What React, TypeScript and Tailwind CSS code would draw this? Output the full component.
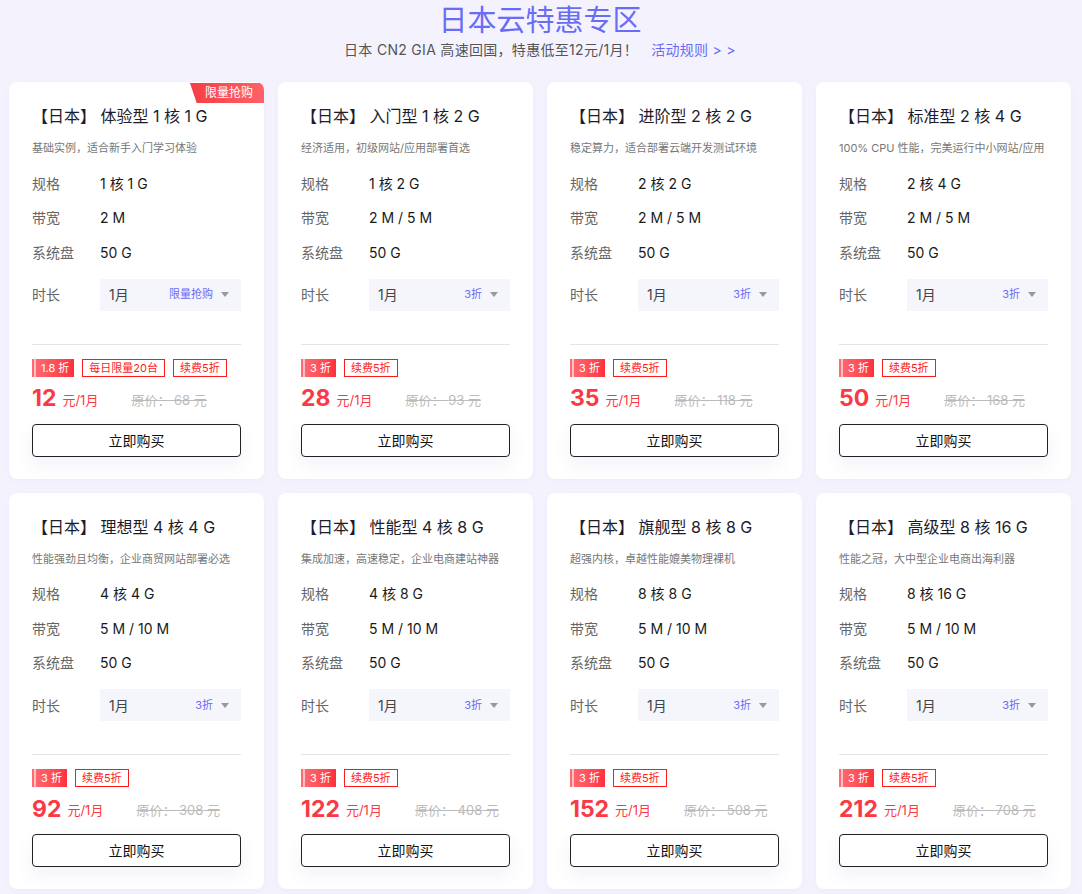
const plans = [
  { name: '体验型', spec: '1 核 1 G', desc: '基础实例，适合新手入门学习体验', bw: '2 M', sel: '限量抢购', off: '1.8 折', tags: ['每日限量20台', '续费5折'], price: 12, orig: 68, hot: true },
  { name: '入门型', spec: '1 核 2 G', desc: '经济适用，初级网站/应用部署首选', bw: '2 M / 5 M', sel: '3折', off: '3 折', tags: ['续费5折'], price: 28, orig: 93 },
  { name: '进阶型', spec: '2 核 2 G', desc: '稳定算力，适合部署云端开发测试环境', bw: '2 M / 5 M', sel: '3折', off: '3 折', tags: ['续费5折'], price: 35, orig: 118 },
  { name: '标准型', spec: '2 核 4 G', desc: '100% CPU 性能，完美运行中小网站/应用', bw: '2 M / 5 M', sel: '3折', off: '3 折', tags: ['续费5折'], price: 50, orig: 168 },
  { name: '理想型', spec: '4 核 4 G', desc: '性能强劲且均衡，企业商贸网站部署必选', bw: '5 M / 10 M', sel: '3折', off: '3 折', tags: ['续费5折'], price: 92, orig: 308 },
  { name: '性能型', spec: '4 核 8 G', desc: '集成加速，高速稳定，企业电商建站神器', bw: '5 M / 10 M', sel: '3折', off: '3 折', tags: ['续费5折'], price: 122, orig: 408 },
  { name: '旗舰型', spec: '8 核 8 G', desc: '超强内核，卓越性能媲美物理裸机', bw: '5 M / 10 M', sel: '3折', off: '3 折', tags: ['续费5折'], price: 152, orig: 508 },
  { name: '高级型', spec: '8 核 16 G', desc: '性能之冠，大中型企业电商出海利器', bw: '5 M / 10 M', sel: '3折', off: '3 折', tags: ['续费5折'], price: 212, orig: 708 },
]

type Plan = (typeof plans)[number]

function Card({ p }: { p: Plan }) {
  return (
    <div className="relative overflow-hidden bg-white rounded-lg shadow-[0_2px_10px_rgba(100,100,200,0.06)] px-[23px] pt-[22px] pb-[22px]">
      {p.hot && (
        <div className="absolute top-px right-0 w-[74px] h-[20px] bg-gradient-to-r from-[#f63c44] to-[#ff6168] [clip-path:polygon(0_0,100%_0,100%_100%,9%_100%)] text-white text-[12px] leading-[20px] text-center pl-[4px]">
          限量抢购
        </div>
      )}
      <div className="text-[16px] leading-[24px] text-[#1c1c2c]">【日本】 {p.name} {p.spec}</div>
      <div className="mt-[10px] text-[11px] leading-[20px] text-[#777]">{p.desc}</div>
      <div className="mt-[8px] text-[14px]">
        {[
          ['规格', p.spec],
          ['带宽', p.bw],
          ['系统盘', '50 G'],
        ].map(([k, v]) => (
          <div key={k} className="flex items-center h-[34.5px]">
            <span className="w-[68px] text-[#666]">{k}</span>
            <span className="text-[#1a1a1a]">{v}</span>
          </div>
        ))}
      </div>
      <div className="mt-[9px] flex items-center text-[14px]">
        <span className="w-[68px] text-[#666]">时长</span>
        <div className="flex-1 h-[32px] bg-[#f5f6fb] flex items-center pl-[9px] pr-[12px]">
          <span className="text-[#444]">1月</span>
          <span className="ml-auto text-[11px] text-[#6b6cf6]">{p.sel}</span>
          <span className="ml-[8px] w-0 h-0 border-l-[4px] border-r-[4px] border-t-[5px] border-l-transparent border-r-transparent border-t-[#999]" />
        </div>
      </div>
      <div className="mt-[33px] h-px bg-[#e4e4e8]" />
      <div className="mt-[14px] flex items-center gap-[8px] text-[11px] leading-[16px]">
        <span className="relative h-[18px] flex items-center pl-[9px] pr-[5px] text-white bg-gradient-to-r from-[#ff6b74] to-[#ff2f3c]">
          <span className="absolute left-[2px] top-0 bottom-0 w-[2px] bg-[#ffc0c4]" />
          {p.off}
        </span>
        {p.tags.map((t) => (
          <span key={t} className="h-[18px] flex items-center px-[6px] border border-[#ff1a1a] text-[#ff1a1a]">
            {t}
          </span>
        ))}
      </div>
      <div className="mt-[8px] h-[28px] flex items-center">
        <span className="text-[23px] font-bold text-[#fb3945]">{p.price}</span>
        <span className="ml-[6px] mt-[4px] text-[13px] text-[#fb3945]">元/1月</span>
        <span className="ml-[33px] mt-[4px] text-[13px] text-[#bbb] line-through">原价： {p.orig} 元</span>
      </div>
      <button className="mt-[11px] w-full h-[33px] border border-[#222] rounded-[4px] text-[14px] text-[#111] bg-white shadow-[0_8px_18px_rgba(90,90,180,0.08)]">
        立即购买
      </button>
    </div>
  )
}

export default function App() {
  return (
    <main
      className="min-h-screen bg-[#f4f3fd] pl-[9px] pr-[11px] pb-[6px]"
      style={{ fontFamily: 'Inter, "Noto Sans CJK SC", sans-serif' }}
    >
      <div className="text-center pt-[2px] h-[82px]">
        <h1 className="text-[29px] leading-[38px] text-[#6b6cf6]">日本云特惠专区</h1>
        <p className="text-[14px] leading-[20px] text-[#555] tracking-[0.3px]">
          日本 CN2 GIA 高速回国，特惠低至12元/1月！
          <span className="ml-[13px] text-[#6b6cf6]">活动规则 &gt; &gt;</span>
        </p>
      </div>
      <div className="grid grid-cols-4 gap-[14px]">
        {plans.map((p) => (
          <Card key={p.name} p={p} />
        ))}
      </div>
    </main>
  )
}
